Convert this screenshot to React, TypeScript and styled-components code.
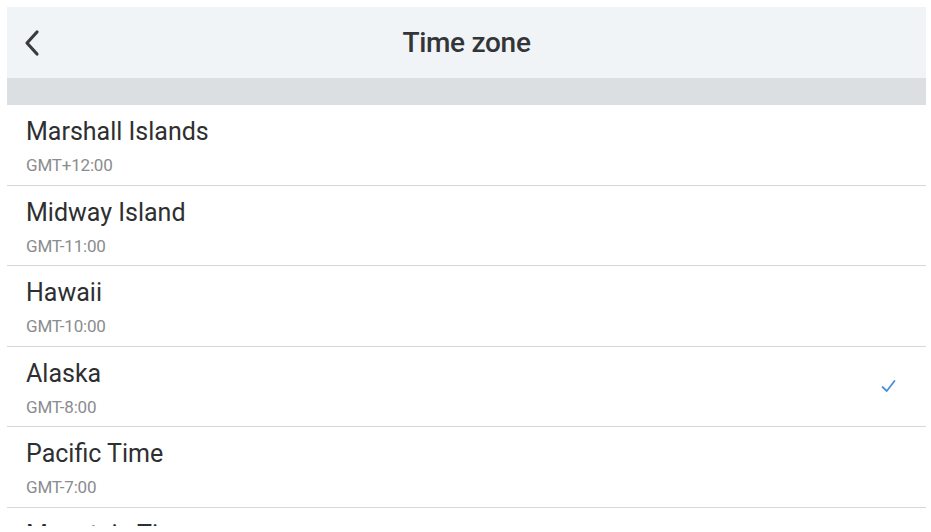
import React from "react";
import styled, { createGlobalStyle } from "styled-components";

const Global = createGlobalStyle`
  html, body { margin: 0; padding: 0; background: #ffffff; overflow: hidden; }
  body { font-family: Roboto, "Noto Sans", "Liberation Sans", sans-serif; }
`;

const Page = styled.div`
  width: 931px;
  height: 526px;
  box-sizing: border-box;
  padding: 7px 5px 0 7px;
  overflow: hidden;
  display: flex;
  flex-direction: column;
`;

const Header = styled.header`
  height: 71px;
  flex: none;
  background: #f1f4f6;
  display: grid;
  grid-template-columns: 60px 1fr 60px;
  align-items: center;
`;

const BackButton = styled.button`
  border: 0;
  background: transparent;
  padding: 0 0 0 16px;
  height: 100%;
  display: flex;
  align-items: center;
  cursor: pointer;
`;

const Title = styled.h1`
  margin: 0;
  text-align: center;
  font-family: Roboto, "Noto Sans", sans-serif;
  font-weight: 500;
  font-size: 28px;
  letter-spacing: -0.3px;
  color: #333538;
`;

const Band = styled.div`
  height: 27px;
  flex: none;
  background: #dcdfe1;
`;

const List = styled.ul`
  list-style: none;
  margin: 0;
  padding: 0;
`;

const Row = styled.li`
  box-sizing: border-box;
  height: 80.5px;
  border-bottom: 1.5px solid #d6d7d8;
  padding: 13px 30px 0 19px;
  display: flex;
  align-items: flex-start;
  justify-content: space-between;
`;

const Texts = styled.div`
  display: flex;
  flex-direction: column;
`;

const Name = styled.span`
  font-size: 25px;
  color: #2e2f31;
  line-height: 28px;
`;

const Offset = styled.span`
  font-size: 17px;
  color: #8a8c8e;
  line-height: 20px;
  margin-top: 9px;
  letter-spacing: -0.2px;
`;

const Check = styled.svg`
  width: 15px;
  height: 14px;
  margin-top: 19px;
`;

const zones = [
  { name: "Marshall Islands", offset: "GMT+12:00" },
  { name: "Midway Island", offset: "GMT-11:00" },
  { name: "Hawaii", offset: "GMT-10:00" },
  { name: "Alaska", offset: "GMT-8:00", selected: true },
  { name: "Pacific Time", offset: "GMT-7:00" },
  { name: "Mountain Time", offset: "GMT-6:00" },
];

export default function App() {
  return (
    <>
      <Global />
      <Page>
        <Header>
          <BackButton aria-label="Back">
            <svg width="18" height="28" viewBox="0 0 18 28">
              <path d="M14 3 L4 14 L14 25" fill="none" stroke="#3a3b3d" strokeWidth="3.2" strokeLinecap="round" strokeLinejoin="round" />
            </svg>
          </BackButton>
          <Title>Time zone</Title>
          <span />
        </Header>
        <Band />
        <List>
          {zones.map((z) => (
            <Row key={z.name}>
              <Texts>
                <Name>{z.name}</Name>
                <Offset>{z.offset}</Offset>
              </Texts>
              {z.selected && (
                <Check viewBox="0 0 15 14">
                  <path d="M1.5 8 L5.8 12 L13.5 2" fill="none" stroke="#4a8fdc" strokeWidth="1.8" strokeLinecap="round" strokeLinejoin="round" />
                </Check>
              )}
            </Row>
          ))}
        </List>
      </Page>
    </>
  );
}
